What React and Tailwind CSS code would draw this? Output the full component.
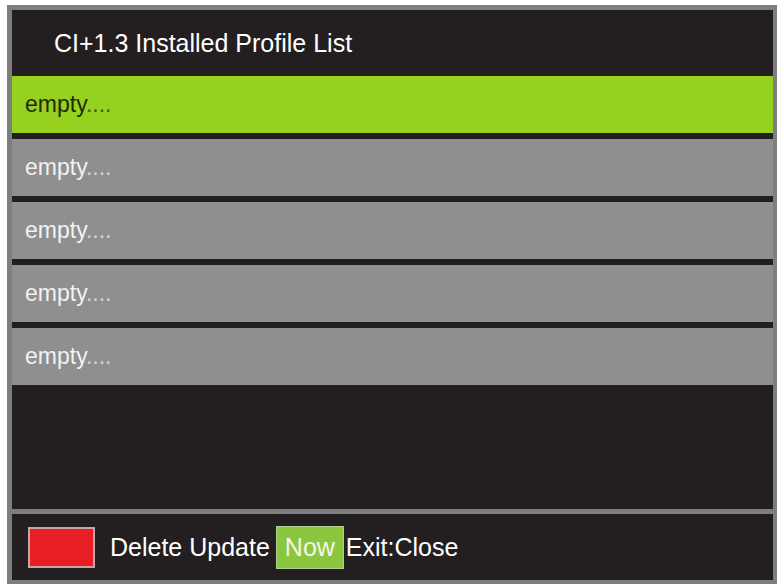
import React from "react";

const rows = [0, 1, 2, 3, 4];

export default function App() {
  return (
    <div
      className="w-[778px] h-[584px] bg-white overflow-hidden"
      style={{ fontFamily: '"Liberation Sans", Arial, sans-serif' }}
    >
      <div className="ml-[7px] mt-[5px] w-[770px] h-[579px] border-[#7e7e7e] border-l-[5px] border-t-[5px] border-r-[4px] border-b-[4px] bg-[#231f20] flex flex-col">
        {/* Title */}
        <div className="h-[66px] shrink-0 flex items-center pl-[42px]">
          <span className="text-[25px] leading-[28px] text-white whitespace-nowrap">
            CI+1.3 Installed Profile List
          </span>
        </div>

        {/* List */}
        <div className="flex flex-col gap-[6px]">
          {rows.map((i) => (
            <div
              key={i}
              className={
                i === 0
                  ? "h-[57px] bg-[#95d11e] flex items-center pl-[13px]"
                  : "h-[57px] bg-[#8f8f8f] flex items-center pl-[13px]"
              }
            >
              <span
                className={
                  i === 0
                    ? "text-[23px] text-[#1f2a0c] leading-none"
                    : "text-[23px] text-[#f2f2f2] leading-none"
                }
              >
                empty<span className="opacity-70">....</span>
              </span>
            </div>
          ))}
        </div>

        <div className="flex-1" />

        {/* Separator */}
        <div className="h-[5px] bg-[#7e7e7e] shrink-0" />

        {/* Footer */}
        <div className="h-[66px] shrink-0 flex items-center pl-[16px]">
          <div className="w-[67px] h-[41px] bg-[#e81e25] border-2 border-[#c9a3a5] shrink-0" />
          <span className="ml-[15px] text-[25px] text-white leading-none whitespace-nowrap">
            Delete Update
          </span>
          <span className="ml-[6px] h-[43px] px-[8px] bg-[#8cc63f] border border-[#b0cf92] flex items-center text-[25px] text-[#f3f7ea] leading-none">
            Now
          </span>
          <span className="ml-[2px] text-[25px] text-white leading-none whitespace-nowrap">
            Exit:Close
          </span>
        </div>
      </div>
    </div>
  );
}
